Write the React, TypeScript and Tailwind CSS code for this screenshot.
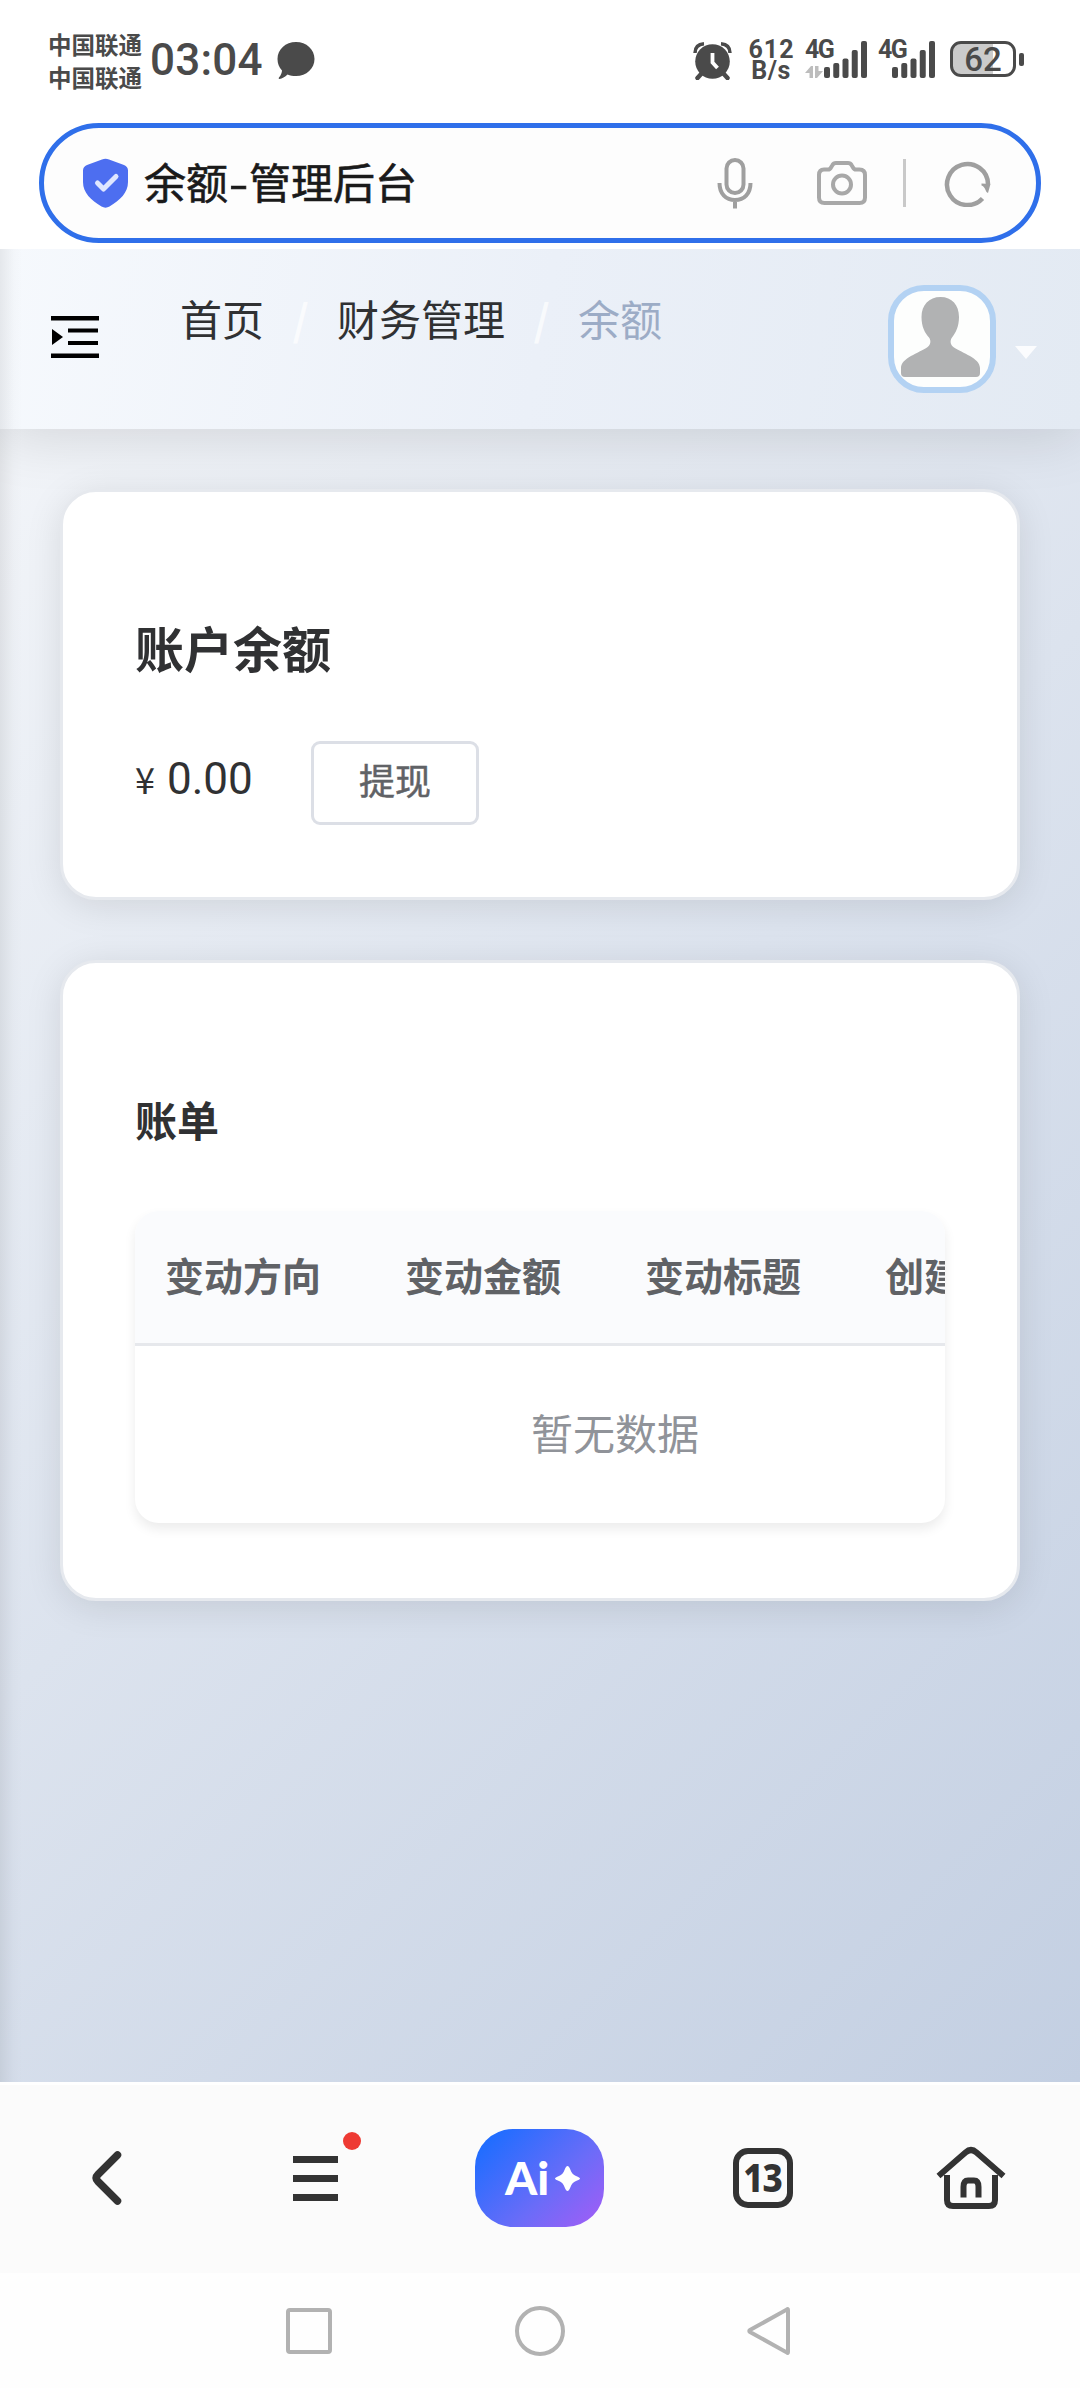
import React from "react";

const BREADCRUMBS = ["首页", "财务管理"];
const COLUMNS = ["变动方向", "变动金额", "变动标题", "创建时间"];

function Signal({ heights }: { heights: number[] }) {
  return (
    <svg width="43" height="37" viewBox="0 0 43 37" fill="#4a4a4a">
      {heights.map((h, i) => (
        <rect key={i} x={i * 9.25} y={37 - h} width="6" height={h} rx="2" />
      ))}
    </svg>
  );
}

function StatusBar() {
  return (
    <div className="flex h-[123px] items-start text-[#4a4a4a]">
      <div className="mt-[28px] ml-[48px] w-[96px] text-[23.5px] leading-[33px] font-bold whitespace-nowrap">
        <div>中国联通</div>
        <div>中国联通</div>
      </div>
      <div className="mt-[34px] ml-[6px] w-[114px] font-[Roboto] text-[44px] leading-[52px] font-medium tracking-[0.2px]">
        03:04
      </div>
      <svg className="mt-[41px] ml-[13px]" width="38" height="38" viewBox="0 0 38 38" fill="#4a4a4a">
        <path d="M19 1C29.500 1 37.500 8.500 37.500 18S29.500 35 19 35C16 35 13 34.500 10.500 33.500C8 36 5 37.800 2.500 38C1.500 38 1.500 37 2 36.500C4 34 5 31.500 5 29.500C2 26.500 .5 22.500 .5 18C.5 8.500 8.500 1 19 1Z" />
      </svg>
      <svg className="mt-[42px] ml-[378px]" width="39" height="38" viewBox="0 0 39 38">
        <path d="M2 11Q2 2.500 11 1.800M37 11Q37 2.500 28 1.800" stroke="#4a4a4a" strokeWidth="3.500" fill="none" />
        <path d="M4.500 36L9 31M34.500 36L30 31" stroke="#4a4a4a" strokeWidth="4.500" strokeLinecap="round" />
        <circle cx="19.500" cy="19.500" r="17.300" fill="#4a4a4a" />
        <path d="M19.500 11V20.500L24.500 26" stroke="#fff" strokeWidth="3.800" fill="none" />
      </svg>
      <div className="mt-[39px] ml-[16px] w-[46px] text-center font-[Roboto] text-[25px] leading-[21px] font-bold">
        <div className="-mr-[1px] tracking-[1px]">612</div>
        <div className="tracking-[0.5px]">B/s</div>
      </div>
      <div className="mt-[41px] ml-[11px] w-[62px]">
        <div className="relative h-[37px]">
          <span className="absolute -top-[5px] left-0 font-[Roboto] text-[25px] leading-[28px] font-bold tracking-[-1.500px]">4G</span>
          <svg className="absolute top-[25px] left-0" width="18" height="13" viewBox="0 0 18 13" fill="#bdbdbd">
            <path d="M0 7L6 0H8V12H4.500V7ZM10 0H13.500V5H18L12 12H10Z" />
          </svg>
          <div className="absolute top-0 left-[19px]">
            <Signal heights={[11, 15, 19.500, 28, 37]} />
          </div>
        </div>
      </div>
      <div className="relative mt-[41px] ml-[11px] h-[37px] w-[57px]">
        <span className="absolute -top-[5px] left-0 font-[Roboto] text-[25px] leading-[28px] font-bold tracking-[-1.500px]">4G</span>
        <div className="absolute top-0 left-[14px]">
          <Signal heights={[11, 15, 19.500, 28, 37]} />
        </div>
      </div>
      <div className="mt-[41px] ml-[15px] flex items-center">
        <div className="flex h-[36px] w-[66px] items-center justify-center rounded-[11px] border-[3px] border-[#4a4a4a] bg-[linear-gradient(90deg,#cbcbcb_66%,#fff_66%)] font-[Roboto] text-[33px] leading-none font-medium">
          62
        </div>
        <div className="ml-[3px] h-[13px] w-[5px] rounded-[2px] bg-[#4a4a4a]" />
      </div>
    </div>
  );
}

function AddressBar() {
  return (
    <div className="mx-[39px] mb-[6px] flex h-[120px] items-center rounded-full border-[5px] border-[#2f6fea] bg-[#fdfdfd]">
      <svg className="ml-[38px]" width="47" height="50" viewBox="0 0 47 50">
        <path d="M20 1.500Q23.500 0 27 1.500L42 7Q46 8.500 46 12.500V24C46 35 38 42 27.500 48.500Q23.500 50.800 19.500 48.500C9 42 1 35 1 24V12.500Q1 8.500 5 7Z" fill="#4d6ef0" />
        <path d="M15.500 25L21.500 31L34 18.500" fill="none" stroke="#dfe6ff" strokeWidth="5" strokeLinecap="round" strokeLinejoin="round" />
      </svg>
      <div className="mb-[5px] ml-[15px] flex w-[300px] text-[42px] leading-[60px] whitespace-nowrap text-[#1a1a1a] [-webkit-text-stroke:0.6px_#1a1a1a]">
        <span>余额</span>
        <span className="inline-block w-[21px] scale-x-135 text-center">-</span>
        <span>管理后台</span>
      </div>
      <svg className="ml-[273px]" width="36" height="52" viewBox="0 0 36 52" fill="none" stroke="#9f9f9f" strokeWidth="4">
        <rect x="9.500" y="3" width="17" height="33" rx="8.500" />
        <path d="M2.500 26C2.500 37 9 43 18 43S33.500 37 33.500 26M18 43V51.500" />
      </svg>
      <svg className="ml-[63px]" width="52" height="46" viewBox="0 0 52 46" fill="none" stroke="#a8a8a8" strokeWidth="4">
        <path d="M8 9.500H12Q14 9.500 15 7.500L16.500 5Q17.500 3 20 3H32Q34.500 3 35.500 5L37 7.500Q38 9.500 40 9.500H43.500Q49 9.500 49 15V37.500Q49 43 43.500 43H8.500Q3 43 3 37.500V15Q3 9.500 8 9.500Z" />
        <circle cx="26" cy="24.500" r="9" />
      </svg>
      <div className="ml-[35px] h-[48px] w-[3px] bg-[#c9c9c9]" />
      <svg className="ml-[38px]" width="48" height="48" viewBox="0 0 48 48">
        <path d="M38.500 39.500A20.500 20.500 0 1 1 44 25" fill="none" stroke="#9f9f9f" strokeWidth="4.500" />
        <path d="M37.500 24.500L46.500 25L44 34Q42.500 34 41.500 31Q40 27 37.500 26.500Z" fill="#9f9f9f" />
      </svg>
    </div>
  );
}

function PageHeader() {
  return (
    <header className="flex h-[180px] items-start bg-[linear-gradient(100deg,#f6f9fd_0%,#ebf0f8_50%,#e3eaf3_100%)] shadow-[0_6px_60px_rgba(0,0,0,0.13)]">
      <svg className="mt-[67px] ml-[51px]" width="48" height="42" viewBox="0 0 48 42">
        <path d="M0 0H48V4.500H0ZM17 12.500H47V16.500H17ZM17 25H47V29H17ZM0 37.500H48V42H0ZM1 13L12 21L1 29Z" fill="#000" />
      </svg>
      <nav className="mt-[39px] ml-[81px] flex h-[60px] w-[600px] text-[42px] leading-[60px] whitespace-nowrap text-[#303133]">
        {BREADCRUMBS.map((item) => (
          <React.Fragment key={item}>
            <span>{item}</span>
            <span className="w-[73px] text-center font-bold text-white/70">/</span>
          </React.Fragment>
        ))}
        <span className="text-[#9cacc6]">余额</span>
      </nav>
      <div className="mt-[36px] ml-[108px] h-[108px] w-[108px] overflow-hidden rounded-[36px] border-[6px] border-[#b3d2f3] bg-[#fdfefd]">
        <svg width="96" height="96" viewBox="0 0 96 96" fill="#b1b2b3">
          <path d="M46.500 6C58 6 65 14 65 26C65 36 61.500 42 58 46.500C55.500 50 56.500 54 60 56.500C68 62 86 67 86 77V82Q86 86 82 86H11Q7 86 7 82V77C7 67 25 62 33 56.500C36.500 54 37.500 50 35 46.500C31 42 27.500 36 27.500 26C27.500 14 35 6 46.500 6Z" />
        </svg>
      </div>
      <svg className="mt-[97px] ml-[19px]" width="22" height="13" viewBox="0 0 22 13">
        <path d="M0 0H22L11 13Z" fill="#fff" fillOpacity="0.85" />
      </svg>
    </header>
  );
}

function Card({ className, children }: { className: string; children: React.ReactNode }) {
  return (
    <section
      className={
        "mx-[60px] rounded-[36px] border-[3px] border-[#e6e9ee] bg-white px-[72px] text-[#303133] shadow-[0_6px_36px_rgba(0,0,0,0.1)] " +
        className
      }
    >
      {children}
    </section>
  );
}

function BottomBar() {
  return (
    <div className="flex h-[191px] items-start border-t-[3px] border-white bg-[#fbfbfb]">
      <svg className="mt-[65px] ml-[90px]" width="34" height="56" viewBox="0 0 34 56">
        <path d="M27.500 5L8 24.500Q4.500 28 8 31.500L27.500 51" fill="none" stroke="#333" strokeWidth="7.500" strokeLinecap="round" />
      </svg>
      <div className="relative mt-[71px] ml-[169px] flex w-[45px] flex-col gap-[12px]">
        <div className="h-[7px] bg-[#333]" />
        <div className="h-[7px] bg-[#333]" />
        <div className="h-[7px] bg-[#333]" />
        <div className="absolute -top-[24px] left-[50px] h-[18px] w-[18px] rounded-full bg-[#ee3a33]" />
      </div>
      <div className="mt-[44px] ml-[137px] flex h-[98px] w-[129px] items-center rounded-[38px] bg-[linear-gradient(135deg,#1f6dff_10%,#6a6cf8_60%,#a25df6_98%)] pl-[30px] text-white">
        <span className="font-[Lato] text-[46px] leading-[60px] font-black">Ai</span>
        <svg className="ml-[6px]" width="25" height="25" viewBox="0 0 25 25">
          <path d="M12.500 0Q14 0 15.500 4Q17 8.500 21 10Q25 11.500 25 12.500T21 15Q17 16.500 15.500 21Q14 25 12.500 25T9.500 21Q8 16.500 4 15Q0 13.500 0 12.500T4 10Q8 8.500 9.500 4Q11 0 12.500 0Z" fill="#fff" />
        </svg>
      </div>
      <div className="mt-[63px] ml-[129px] flex h-[60px] w-[60px] items-center justify-center rounded-[15px] border-[6px] border-[#333] text-[#333]">
        <span className="mb-[3px] scale-x-90 font-['Noto_Sans'] text-[39px] leading-none font-extrabold tracking-[-1px]">13</span>
      </div>
      <svg className="mt-[61px] ml-[143px]" width="70" height="64" viewBox="0 0 70 64" fill="none" stroke="#333" strokeWidth="6">
        <path d="M2.500 30L29.500 6.500Q35 1.500 40.500 6.500L67.500 30" />
        <path d="M11 29V54Q11 60 17 60H53Q59 60 59 54V29" />
        <path d="M27.500 51.500V41Q27.500 34.500 32 34.500H38Q42.500 34.500 42.500 41V51.500" />
      </svg>
    </div>
  );
}

function SystemNav() {
  return (
    <div className="flex h-[115px] items-start bg-[#fefefe]">
      <div className="mt-[35px] ml-[286px] h-[46px] w-[46px] rounded-[4px] border-4 border-[#b2b2b2]" />
      <div className="mt-[33px] ml-[183px] h-[50px] w-[50px] rounded-full border-4 border-[#b2b2b2]" />
      <svg className="mt-[32px] ml-[181px]" width="46" height="52" viewBox="0 0 46 52">
        <path d="M41 4.500Q42 3.500 42 5V47Q42 48.500 41 47.500L4 27Q2.500 26 4 25Z" fill="none" stroke="#b2b2b2" strokeWidth="4" />
      </svg>
    </div>
  );
}

export default function App() {
  return (
    <div className="flex h-[2388px] w-[1080px] flex-col overflow-hidden bg-white font-['Noto_Sans_CJK_SC',sans-serif]">
      <StatusBar />
      <AddressBar />
      <main className="relative h-[1833px] overflow-hidden bg-[linear-gradient(135deg,#f5f7fa_0%,#c3cfe2_100%)]">
        <PageHeader />

        <Card className="mt-[60px] h-[411px] pt-[117px]">
          <h1 className="h-[76px] text-[49px] leading-[76px] font-bold">账户余额</h1>
          <div className="mt-[56px] flex h-[84px]">
            <div className="flex w-[176px] items-baseline leading-[74px]">
              <span className="w-[32px] text-[36px]">¥</span>
              <span className="font-[Roboto] text-[44px]">0.00</span>
            </div>
            <button className="h-[84px] w-[168px] rounded-[9px] border-[3px] border-[#dcdfe6] pb-[8px] text-[36px] text-[#606266] [-webkit-text-stroke:0.5px_#606266]">
              提现
            </button>
          </div>
        </Card>

        <Card className="mt-[60px] h-[641px] pt-[123px]">
          <h2 className="h-[66px] text-[42px] leading-[66px] font-bold">账单</h2>
          <div className="mt-[59px] h-[312px] w-[810px] overflow-hidden rounded-[24px] shadow-[0_6px_12px_rgba(0,0,0,0.08)]">
            <div className="flex h-[135px] w-[960px] items-center border-b-[3px] border-[#e6e8ec] bg-[#fafbfd] pb-[6px] text-[39px] font-bold text-[#606266]">
              {COLUMNS.map((name) => (
                <div key={name} className="w-[240px] shrink-0 pl-[30px] whitespace-nowrap">
                  {name}
                </div>
              ))}
            </div>
            <div className="flex h-[177px] w-[960px] items-center justify-center pb-[7px] text-[42px] text-[#909399]">暂无数据</div>
          </div>
        </Card>

        <div className="absolute top-0 left-0 h-full w-[22px] bg-[linear-gradient(90deg,rgba(0,0,0,0.07),rgba(0,0,0,0.015)_60%,rgba(0,0,0,0))]" />
      </main>
      <BottomBar />
      <SystemNav />
    </div>
  );
}
